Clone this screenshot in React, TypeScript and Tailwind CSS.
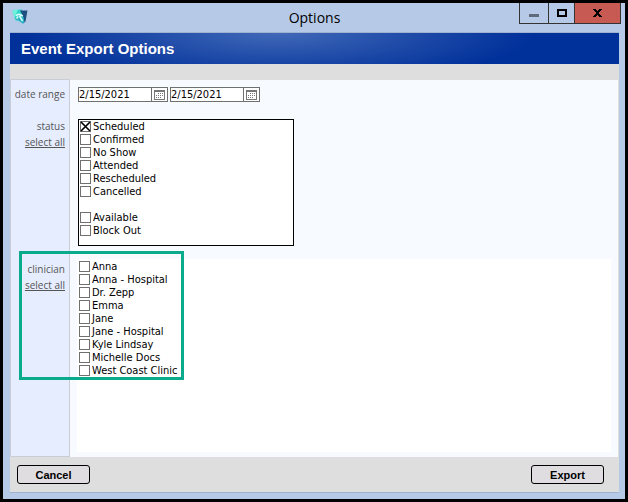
import React, { useState } from 'react';

interface CheckItem {
  label: string;
  checked?: boolean;
  spaced?: boolean;
}

const STATUSES: CheckItem[] = [
  { label: 'Scheduled', checked: true },
  { label: 'Confirmed' },
  { label: 'No Show' },
  { label: 'Attended' },
  { label: 'Rescheduled' },
  { label: 'Cancelled' },
  { label: 'Available', spaced: true },
  { label: 'Block Out' },
];

const CLINICIANS: CheckItem[] = [
  { label: 'Anna' },
  { label: 'Anna - Hospital' },
  { label: 'Dr. Zepp' },
  { label: 'Emma' },
  { label: 'Jane' },
  { label: 'Jane - Hospital' },
  { label: 'Kyle Lindsay' },
  { label: 'Michelle Docs' },
  { label: 'West Coast Clinic' },
];

function AppLogo() {
  return (
    <svg className="w-4 h-4" viewBox="0 0 16 16" aria-hidden="true">
      <path d="M0.5 1 L10 0.5 L11 9 L4 12 L2.5 9 Z" fill="#35d3cb" />
      <path d="M0.5 1 L6 0.8 L4 5 L2.5 9 Z" fill="#6ff2dc" />
      <path d="M8 1.5 L15.5 1.5 L13.5 12.5 L11 14.5 L10.5 6 Z" fill="#1c4f80" />
      <path d="M3 9.5 L6 7 L11.5 8 L12.5 13 L11 14.8 Z" fill="#2bb3c4" />
      <path d="M4 6.8 Q6.5 3.8 10.8 7.2 M6.3 7.5 L4.5 9.5 M7.5 7 L10.5 12" fill="none" stroke="#d9fffb" strokeWidth="1.5" />
    </svg>
  );
}

function CalendarIcon() {
  return (
    <svg className="w-[11px] h-[10px]" viewBox="0 0 11 10" shapeRendering="crispEdges" aria-hidden="true">
      <path d="M0 0h11v10H0z" fill="#777" />
      <path d="M1 2h9v7H1z" fill="#fff" />
      <path
        d="M4 3h1v1H4zM6 3h1v1H6zM8 3h1v1H8zM2 5h1v1H2zM4 5h1v1H4zM6 5h1v1H6zM8 5h1v1H8zM2 7h1v1H2zM4 7h1v1H4zM6 7h1v1H6z"
        fill="#777"
      />
    </svg>
  );
}

function DateField({ label }: { label: string }) {
  const [value, setValue] = useState('2/15/2021');
  return (
    <div className="flex w-[90px] h-[15px] border border-[#707070] bg-white">
      <input
        type="text"
        aria-label={label}
        value={value}
        onChange={(e) => setValue(e.target.value)}
        className="flex-1 min-w-0 text-[11px] leading-[13px] text-black outline-none"
      />
      <button
        type="button"
        aria-label={`Choose ${label}`}
        className="w-4 border-l border-[#707070] flex items-center justify-center"
      >
        <CalendarIcon />
      </button>
    </div>
  );
}

function CheckList({ items, onToggle }: { items: CheckItem[]; onToggle: (index: number) => void }) {
  return (
    <ul>
      {items.map((item, index) => (
        <li key={item.label} className={item.spaced ? 'mt-[13px]' : ''}>
          <label className="flex items-center gap-0.5 h-[13px] text-[11px] leading-[13px] text-black whitespace-nowrap">
            <span className="relative flex w-[11px] h-[11px]">
              <input
                type="checkbox"
                checked={!!item.checked}
                onChange={() => onToggle(index)}
                className="appearance-none w-[11px] h-[11px] border border-[#707070] bg-white"
              />
              {item.checked && (
                <svg className="absolute inset-0 pointer-events-none" viewBox="0 0 11 11" aria-hidden="true">
                  <path d="M1 1 L10 10 M10 1 L1 10" stroke="#000" strokeWidth="1.6" />
                </svg>
              )}
            </span>
            {item.label}
          </label>
        </li>
      ))}
    </ul>
  );
}

function SelectAll({ onClick }: { onClick: () => void }) {
  return (
    <a
      href="#"
      className="underline"
      onClick={(e) => {
        e.preventDefault();
        onClick();
      }}
    >
      select all
    </a>
  );
}

const labelCell =
  "flex flex-col items-end pr-1 border-x border-[#c9cdd6] bg-[#e6edff] font-['Open_Sans',sans-serif] text-[10px] leading-4 text-[#555] whitespace-nowrap";

const footerButton =
  'w-[73px] h-[19px] rounded-[3px] border border-black bg-[#e0dde0] text-[11px] leading-4 font-bold text-black';

export default function App() {
  const [statuses, setStatuses] = useState(STATUSES);
  const [clinicians, setClinicians] = useState(CLINICIANS);

  const toggle = (items: CheckItem[], index: number) =>
    items.map((item, i) => (i === index ? { ...item, checked: !item.checked } : item));
  const checkAll = (items: CheckItem[]) => items.map((item) => ({ ...item, checked: true }));

  return (
    <div className="min-h-screen flex flex-col border-[3px] border-black bg-[#b6cae8] font-['DejaVu_Sans_Condensed','DejaVu_Sans',sans-serif]">
      {/* Title bar */}
      <header className="h-[29px] grid grid-cols-[1fr_auto_1fr] items-start pl-[9px] pr-1">
        <div className="pt-[6px]">
          <AppLogo />
        </div>
        <h1 className="pr-1 font-['Open_Sans',sans-serif] text-[14px] leading-[29px] text-black">Options</h1>
        <div className="flex justify-end">
          <button
            type="button"
            aria-label="Minimize"
            className="w-[29px] h-[21px] border-l border-b border-[#333] flex items-center justify-center pt-1"
          >
            <span className="w-[10px] h-[3px] bg-[#5f6b7b]" />
          </button>
          <button
            type="button"
            aria-label="Maximize"
            className="w-[26px] h-[21px] border-l border-b border-[#333] flex items-center justify-center"
          >
            <span className="w-[10px] h-2 border-2 border-black" />
          </button>
          <button
            type="button"
            aria-label="Close"
            className="w-[47px] h-[21px] border-x border-b border-[#333] bg-[#c75a53] flex items-center justify-center"
          >
            <svg className="w-[9px] h-2" viewBox="0 0 9 8" shapeRendering="crispEdges" aria-hidden="true">
              <path
                d="M0 0h3v1H0zM6 0h3v1H6zM1 1h3v1H1zM5 1h3v1H5zM2 2h5v1H2zM3 3h3v2H3zM2 5h5v1H2zM1 6h3v1H1zM5 6h3v1H5zM0 7h3v1H0zM6 7h3v1H6z"
                fill="#000"
              />
            </svg>
          </button>
        </div>
      </header>

      <main className="flex-1 flex flex-col ml-[7px] mr-[6px] mb-[6px] border-y border-[#9fb2d0] bg-[#dedede]">
        <h2 className="h-[31px] pl-[11px] bg-[radial-gradient(ellipse_42%_160%_at_44%_0%,#4169b8,#00309a)] font-['Liberation_Sans',Arial,sans-serif] text-[15px] leading-[31px] font-bold text-white">
          Event Export Options
        </h2>

        <div className="flex-1 flex flex-col mt-[15px] mr-px">
          <section className="grid grid-cols-[60px_1fr]">
            <div className={`${labelCell} border-t pt-[6px]`}>
              <span>date range</span>
            </div>
            <div className="mt-px pt-[7px] pl-2 flex gap-0.5 bg-[#f7fbff]">
              <DateField label="start date" />
              <DateField label="end date" />
            </div>
          </section>

          <section className="grid grid-cols-[60px_1fr]">
            <div className={`${labelCell} pt-4`}>
              <span>status</span>
              <SelectAll onClick={() => setStatuses(checkAll)} />
            </div>
            <div className="pt-[17px] pl-2 bg-[#f7fbff]">
              <div className="w-[216px] h-[127px] border border-black bg-white pl-px">
                <CheckList items={statuses} onToggle={(i) => setStatuses(toggle(statuses, i))} />
              </div>
            </div>
          </section>

          <section className="relative flex-1 grid grid-cols-[60px_1fr]">
            <div className={`${labelCell} border-b pt-[15px]`}>
              <span>clinician</span>
              <SelectAll onClick={() => setClinicians(checkAll)} />
            </div>
            <div className="flex pt-[13px] pl-[7px] pr-[7px] pb-[5px] bg-[#f7fbff]">
              <div className="flex-1 bg-white pl-0.5 pt-px">
                <CheckList items={clinicians} onToggle={(i) => setClinicians(toggle(clinicians, i))} />
              </div>
            </div>
            {/* Highlight around the clinician picker */}
            <div className="absolute left-[9px] top-[5px] w-[165px] h-[129px] border-[3px] border-[#0aab8c] pointer-events-none" />
          </section>
        </div>

        <footer className="h-[35px] flex items-center justify-between pl-[7px] pr-[15px] font-['Liberation_Sans',Arial,sans-serif]">
          <button type="button" className={footerButton}>
            Cancel
          </button>
          <button type="button" className={footerButton}>
            Export
          </button>
        </footer>
      </main>
    </div>
  );
}
